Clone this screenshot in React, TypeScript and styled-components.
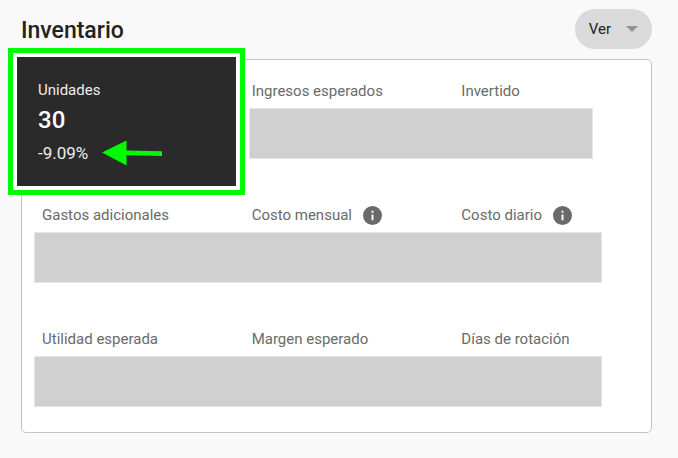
import React from "react";
import styled, { createGlobalStyle } from "styled-components";

const GlobalStyle = createGlobalStyle`
  *, *::before, *::after { box-sizing: border-box; }
  body {
    margin: 0;
    background: #f9f9f9;
    color: #222;
    font-family: Roboto, "Liberation Sans", sans-serif;
  }
`;

const Page = styled.main`
  padding: 9px 26px 25px 21px;
`;

const Header = styled.header`
  display: flex;
  align-items: flex-end;
  justify-content: space-between;
  margin-bottom: 10px;
`;

const Title = styled.h1`
  margin: 0;
  font-size: 23px;
  font-weight: 500;
  line-height: 36px;
`;

const ViewButton = styled.button`
  display: flex;
  align-items: center;
  gap: 15px;
  height: 40px;
  padding: 0 14px;
  border: 0;
  border-radius: 20px;
  background: #dadada;
  color: #222;
  font-family: inherit;
  font-size: 15px;
  cursor: pointer;
`;

const Panel = styled.section`
  border: 1px solid #c4c4c4;
  border-radius: 5px;
  background: #fff;
`;

const Row = styled.div`
  display: grid;
  grid-template-columns: repeat(3, 1fr);
  grid-template-rows: 48px auto;
  min-height: 124px;
`;

const Label = styled.h2`
  display: flex;
  align-items: center;
  gap: 11px;
  height: 20px;
  margin: 21px 0 0;
  padding: 0 20px;
  color: #6a6a6a;
  font-size: 15px;
  font-weight: 400;
  line-height: 20px;
  white-space: nowrap;
`;

const Redaction = styled.div<{ $partial?: boolean }>`
  grid-column: ${(p) => (p.$partial ? "2 / -1" : "1 / -1")};
  height: 51px;
  margin: ${(p) => (p.$partial ? "0 58px 0 17px" : "0 49px 0 12px")};
  border: 1px solid #e6e6e6;
  background: #d0d0d0;
`;

const Highlight = styled.div`
  display: flex;
  grid-row: 1 / -1;
  margin: -12px -13px -11px -14px;
  padding: 4px;
  border: 5px solid #00fb00;
  background: #fff;
`;

const UnitsCard = styled.div`
  flex: 1;
  padding: 23px 21px 20px;
  background: #2a2a2a;
  color: #fff;
`;

const UnitsLabel = styled.h2`
  margin: 0;
  color: #eee;
  font-size: 15px;
  font-weight: 400;
  line-height: 20px;
`;

const UnitsValue = styled.div`
  font-size: 24px;
  font-weight: 500;
  line-height: 40px;
`;

const UnitsChange = styled.div`
  display: flex;
  align-items: center;
  gap: 14px;
  color: #eee;
  font-size: 17px;
  line-height: 24px;
`;

const InfoButton = styled.button`
  display: flex;
  padding: 0;
  border: 0;
  background: none;
  cursor: pointer;
`;

const CaretIcon = () => (
  <svg width="12" height="6" viewBox="0 0 12 6" aria-hidden="true">
    <path d="M0 0h12L6 6z" fill="#949494" />
  </svg>
);

const ArrowIcon = () => (
  <svg width="60" height="26" viewBox="0 0 60 26" aria-hidden="true">
    <path d="M0 12.5L24.5 0.5V10.5L60 11.2V16L24.5 15.3V25.5z" fill="#00fb00" />
  </svg>
);

const InfoIcon = () => (
  <svg width="19" height="19" viewBox="2 2 20 20" aria-hidden="true">
    <path
      d="M12 2a10 10 0 1 0 0 20 10 10 0 0 0 0-20zm1 15h-2v-6h2v6zm0-8h-2V7h2v2z"
      fill="#6a6a6a"
    />
  </svg>
);

const Metric = ({ name, info }: { name: string; info?: boolean }) => (
  <Label>
    {name}
    {info && (
      <InfoButton type="button" aria-label={`Información: ${name}`}>
        <InfoIcon />
      </InfoButton>
    )}
  </Label>
);

export default function App() {
  return (
    <>
      <GlobalStyle />
      <Page>
        <Header>
          <Title>Inventario</Title>
          <ViewButton type="button" aria-haspopup="menu">
            Ver
            <CaretIcon />
          </ViewButton>
        </Header>
        <Panel>
          <Row>
            <Highlight>
              <UnitsCard>
                <UnitsLabel>Unidades</UnitsLabel>
                <UnitsValue>30</UnitsValue>
                <UnitsChange>
                  -9.09%
                  <ArrowIcon />
                </UnitsChange>
              </UnitsCard>
            </Highlight>
            <Metric name="Ingresos esperados" />
            <Metric name="Invertido" />
            <Redaction $partial />
          </Row>
          <Row>
            <Metric name="Gastos adicionales" />
            <Metric name="Costo mensual" info />
            <Metric name="Costo diario" info />
            <Redaction />
          </Row>
          <Row>
            <Metric name="Utilidad esperada" />
            <Metric name="Margen esperado" />
            <Metric name="Días de rotación" />
            <Redaction />
          </Row>
        </Panel>
      </Page>
    </>
  );
}
